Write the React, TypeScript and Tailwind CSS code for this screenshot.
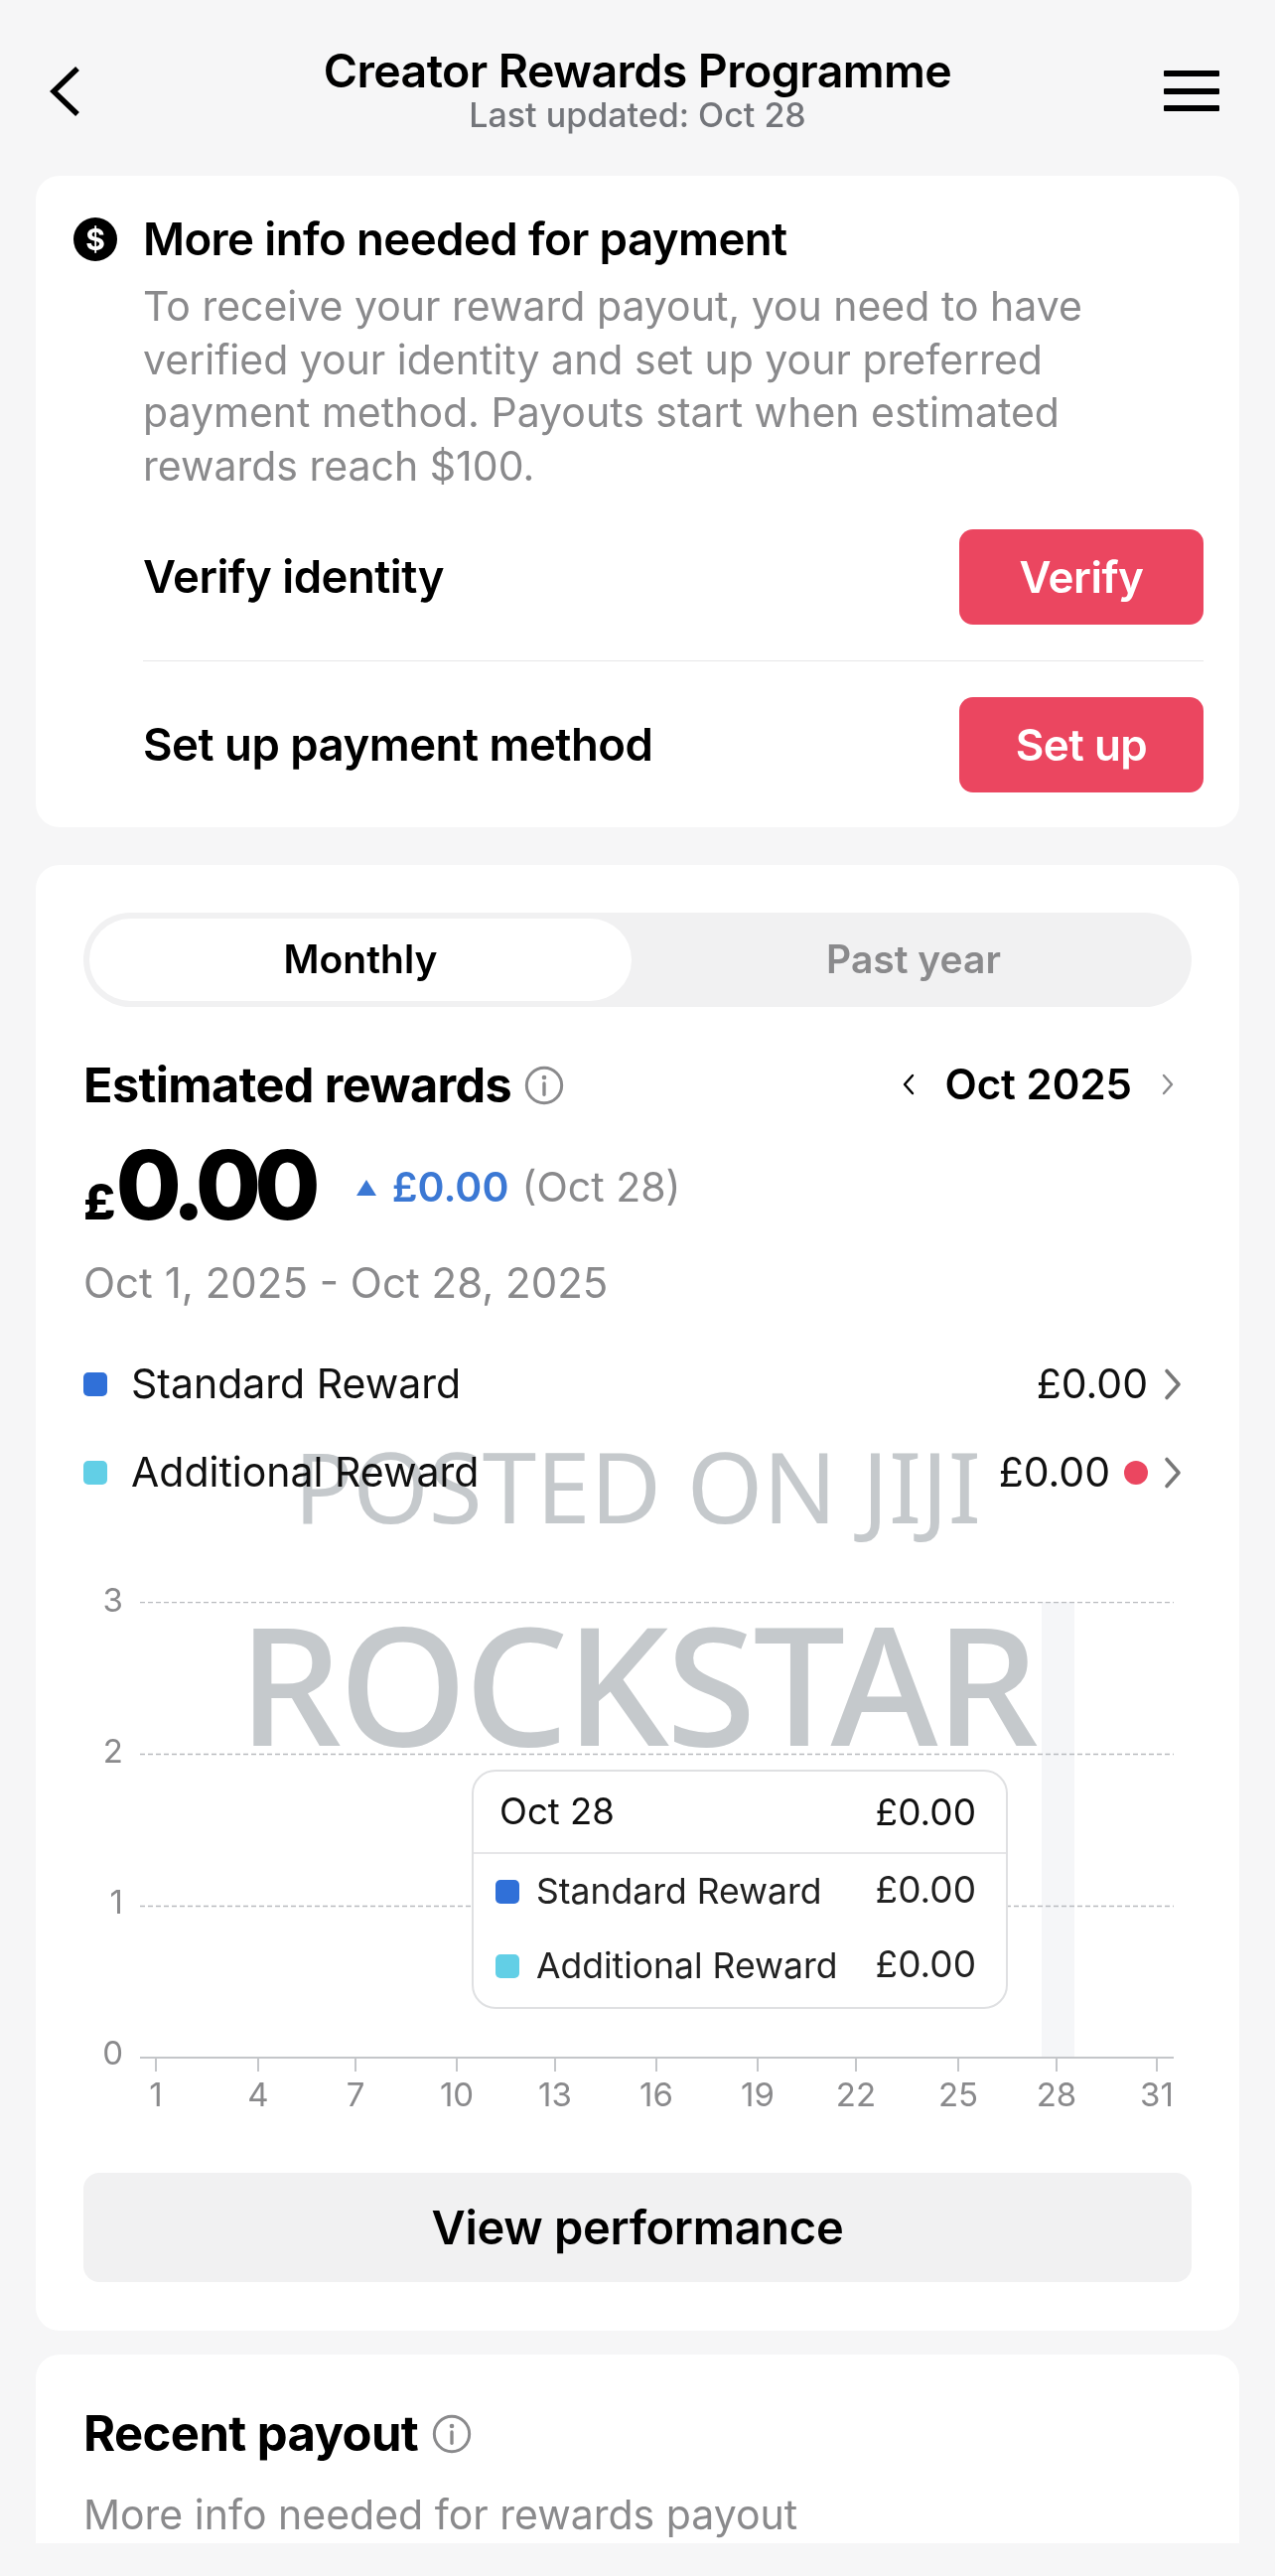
import React from "react";

const ticks = [
  { label: "1", x: 157 },
  { label: "4", x: 260 },
  { label: "7", x: 358 },
  { label: "10", x: 460 },
  { label: "13", x: 559 },
  { label: "16", x: 661 },
  { label: "19", x: 763 },
  { label: "22", x: 862 },
  { label: "25", x: 965 },
  { label: "28", x: 1064 },
  { label: "31", x: 1165 },
];

const Chevron = ({ dir, className }: { dir: "left" | "right"; className: string }) => (
  <svg viewBox="0 0 12 24" fill="none" className={className}>
    <path
      d={dir === "left" ? "M10 3 2 12l8 9" : "M2 3l8 9-8 9"}
      stroke="currentColor"
      strokeWidth="2.4"
      strokeLinecap="round"
      strokeLinejoin="round"
    />
  </svg>
);

const InfoIcon = ({ className }: { className: string }) => (
  <svg viewBox="0 0 24 24" fill="none" className={className}>
    <circle cx="12" cy="12" r="10.6" stroke="currentColor" strokeWidth="1.8" />
    <circle cx="12" cy="7.2" r="1.4" fill="currentColor" />
    <path d="M12 10.8v6.8" stroke="currentColor" strokeWidth="2" strokeLinecap="round" />
  </svg>
);

const ActionRow = ({ label, action }: { label: string; action: string }) => (
  <div className="flex items-center justify-between">
    <span className="text-[45.5px] leading-none font-semibold text-black tracking-[-0.5px]">{label}</span>
    <button className="w-[246px] h-[96px] rounded-[14px] bg-[#eb4660] text-white text-[44px] font-semibold tracking-[-0.5px]">
      {action}
    </button>
  </div>
);

const LegendRow = ({
  color,
  label,
  dot,
}: {
  color: string;
  label: string;
  dot?: boolean;
}) => (
  <div className="flex items-center h-[50px]">
    <span className={`w-[24px] h-[24px] rounded-[5px] ${color}`} />
    <span className="ml-[24px] text-[41px] text-[#111]">{label}</span>
    <span className="ml-auto text-[41px] text-[#111]">£0.00</span>
    {dot && <span className="ml-[14px] w-[24px] h-[24px] rounded-full bg-[#eb4660]" />}
    <Chevron dir="right" className="ml-[16px] w-[18px] h-[36px] text-[#777]" />
  </div>
);

const TooltipRow = ({ color, label }: { color: string; label: string }) => (
  <div className="flex items-center h-[75px]">
    <span className={`w-[24px] h-[24px] rounded-[5px] ${color}`} />
    <span className="ml-[17px] text-[35.5px] text-[#222]">{label}</span>
    <span className="ml-auto mr-[7px] -mt-[3px] text-[37px] text-[#222]">£0.00</span>
  </div>
);

export default function App() {
  return (
    <div className="relative w-[1284px] h-[2594px] overflow-hidden bg-[#f6f6f7] font-['Inter',sans-serif]">
      {/* header */}
      <div className="h-[177px] grid grid-cols-[1fr_auto_1fr] items-start pl-[56px] pr-[56px]">
        <svg viewBox="0 0 30 50" fill="none" className="mt-[67px] -ml-[6px] w-[30px] h-[50px] text-black">
          <path d="M28 2 4 25l24 23" stroke="currentColor" strokeWidth="5.5" strokeLinejoin="miter" />
        </svg>
        <div className="flex flex-col items-center pt-[44px]">
          <span className="text-[46.5px] leading-[54px] font-semibold text-black tracking-[-0.6px]">
            Creator Rewards Programme
          </span>
          <span className="text-[34px] leading-[36px] font-medium text-[#73757a]">Last updated: Oct 28</span>
        </div>
        <div className="mt-[71px] justify-self-end w-[56px] h-[41px] flex flex-col justify-between">
          <span className="h-[6px] bg-black rounded-[1px]" />
          <span className="h-[6px] bg-black rounded-[1px]" />
          <span className="h-[6px] bg-black rounded-[1px]" />
        </div>
      </div>

      <div className="flex flex-col px-[36px]">
        {/* payment info card */}
        <div className="h-[656px] bg-white rounded-[24px] pl-[38px] pr-[36px] pt-[40px]">
          <div className="flex">
            <div className="w-[44px] h-[44px] mt-[2px] rounded-full bg-black flex items-center justify-center text-white text-[30px] font-bold leading-none">
              $
            </div>
            <div className="ml-[26px] flex-1">
              <div className="text-[45.6px] leading-[48px] font-semibold text-black tracking-[-0.6px]">
                More info needed for payment
              </div>
              <p className="mt-[17px] text-[41px] leading-[53.5px] text-[#8a8a8c]">
                To receive your reward payout, you need to have
                <br />
                verified your identity and set up your preferred
                <br />
                payment method. Payouts start when estimated
                <br />
                rewards reach $100.
              </p>
              <div className="mt-[37px]">
                <ActionRow label="Verify identity" action="Verify" />
                <div className="my-[36px] h-px bg-[#e6e6e8]" />
                <ActionRow label="Set up payment method" action="Set up" />
              </div>
            </div>
          </div>
        </div>

        {/* rewards card */}
        <div className="mt-[38px] h-[1476px] bg-white rounded-[24px] px-[48px] pt-[48px]">
          <div className="h-[95px] rounded-full bg-[#f1f1f2] p-[6px] flex">
            <div className="w-[546px] rounded-full bg-white flex items-center justify-center text-[39px] font-semibold text-black">
              Monthly
            </div>
            <div className="flex-1 pl-[10px] flex items-center justify-center text-[39px] font-semibold text-[#8a8a8c]">
              Past year
            </div>
          </div>

          <div className="mt-[54px] flex items-center justify-between h-[50px]">
            <div className="flex items-center">
              <span className="text-[48.6px] font-bold text-black tracking-[-0.6px]">Estimated rewards</span>
              <InfoIcon className="ml-[13px] w-[40px] h-[40px] text-[#8a8a8c]" />
            </div>
            <div className="flex items-center mr-[18px] -mt-[3px]">
              <Chevron dir="left" className="w-[12px] h-[24px] text-black" />
              <span className="mx-[30px] text-[42px] font-semibold text-black">Oct 2025</span>
              <Chevron dir="right" className="w-[12px] h-[24px] text-[#8a8a8c]" />
            </div>
          </div>

          <div className="mt-[28px] flex items-center h-[100px]">
            <div className="flex items-baseline">
              <span className="text-[50px] font-extrabold text-black">£</span>
              <span className="text-[96px] leading-none font-extrabold text-black tracking-[-7px]">0.00</span>
            </div>
            <svg viewBox="0 0 22 18" className="ml-[42px] w-[22px] h-[18px] text-[#3b78d4]">
              <path d="M11 1 21 17H1z" fill="currentColor" />
            </svg>
            <span className="ml-[15px] text-[41px] font-semibold text-[#3b78d4]">£0.00</span>
            <span className="ml-[13px] text-[41px] text-[#8a8a8c]">(Oct 28)</span>
          </div>

          <div className="mt-[21px] text-[42px] leading-[50px] text-[#8a8a8c]">Oct 1, 2025 - Oct 28, 2025</div>

          <div className="mt-[52px] flex flex-col gap-[39px] pr-[10px]">
            <LegendRow color="bg-[#3070d8]" label="Standard Reward" />
            <LegendRow color="bg-[#62cfe6]" label="Additional Reward" dot />
          </div>

          {/* chart */}
          <div className="relative mt-[105px] h-[550px] -mx-[84px]">
            <svg width="1284" height="550" className="absolute left-0 top-0" fill="none">
              <rect x="1049" y="0" width="33" height="458" fill="#f5f6f8" />
              <path d="M141 0.5H1182M141 153.5H1182M141 306.5H1182" stroke="#b9bbbf" strokeWidth="1.5" strokeDasharray="5 3" />
              <path d="M141 459H1182" stroke="#c4c6c9" strokeWidth="2" />
              {ticks.map((t) => (
                <path key={t.label} d={`M${t.x} 459v14`} stroke="#c4c6c9" strokeWidth="2" />
              ))}
            </svg>
            {[
              { v: "3", top: -24 },
              { v: "2", top: 128 },
              { v: "1", top: 280 },
              { v: "0", top: 432 },
            ].map((r) => (
              <span key={r.v} className="absolute left-[92px] w-[32px] text-right text-[33px] leading-[44px] text-[#8a8a8c]" style={{ top: r.top }}>
                {r.v}
              </span>
            ))}
            {ticks.map((t) => (
              <span
                key={t.label}
                className="absolute top-[474px] w-[60px] -ml-[30px] text-center text-[33px] leading-[44px] text-[#8a8a8c]"
                style={{ left: t.x }}
              >
                {t.label}
              </span>
            ))}

            {/* tooltip */}
            <div className="absolute left-[475px] top-[169px] w-[540px] h-[241px] rounded-[24px] border-2 border-[#dfe0e2] bg-white">
              <div className="h-[83px] flex items-center justify-between pl-[26px] pr-[30px] border-b-2 border-[#e6e6e8]">
                <span className="text-[36.5px] text-[#111]">Oct 28</span>
                <span className="text-[37px] text-[#111]">£0.00</span>
              </div>
              <div className="pl-[22px] pr-[23px]">
                <TooltipRow color="bg-[#3070d8]" label="Standard Reward" />
                <TooltipRow color="bg-[#62cfe6]" label="Additional Reward" />
              </div>
            </div>
          </div>

          <button className="mt-[25px] w-full h-[110px] rounded-[16px] bg-[#f1f1f2] text-[47px] font-semibold text-black tracking-[-0.3px]">
            View performance
          </button>
        </div>

        {/* recent payout card, cut off by the screenshot */}
        <div className="mt-[24px] h-[190px] overflow-hidden bg-white rounded-t-[24px] px-[48px] pt-[54px]">
          <div className="flex items-center h-[52px]">
            <span className="text-[49px] font-bold text-black tracking-[-0.6px]">Recent payout</span>
            <InfoIcon className="ml-[14px] w-[40px] h-[40px] text-[#8a8a8c]" />
          </div>
          <div className="mt-[30px] text-[41px] leading-[50px] text-[#8a8a8c]">More info needed for rewards payout</div>
        </div>
      </div>

      {/* watermark sits over the page */}
      <div className="absolute left-[296px] top-[1431px] text-[98px] leading-[130px] text-[#c5c9cc] whitespace-nowrap mix-blend-multiply font-['Noto_Sans',sans-serif]">
        POSTED ON JIJI
      </div>
      <div className="absolute left-[240px] top-[1584px] text-[165px] leading-[220px] font-medium tracking-[-3px] text-[#c5c9cc] whitespace-nowrap mix-blend-multiply font-['Noto_Sans',sans-serif]">
        ROCKSTAR
      </div>
    </div>
  );
}
